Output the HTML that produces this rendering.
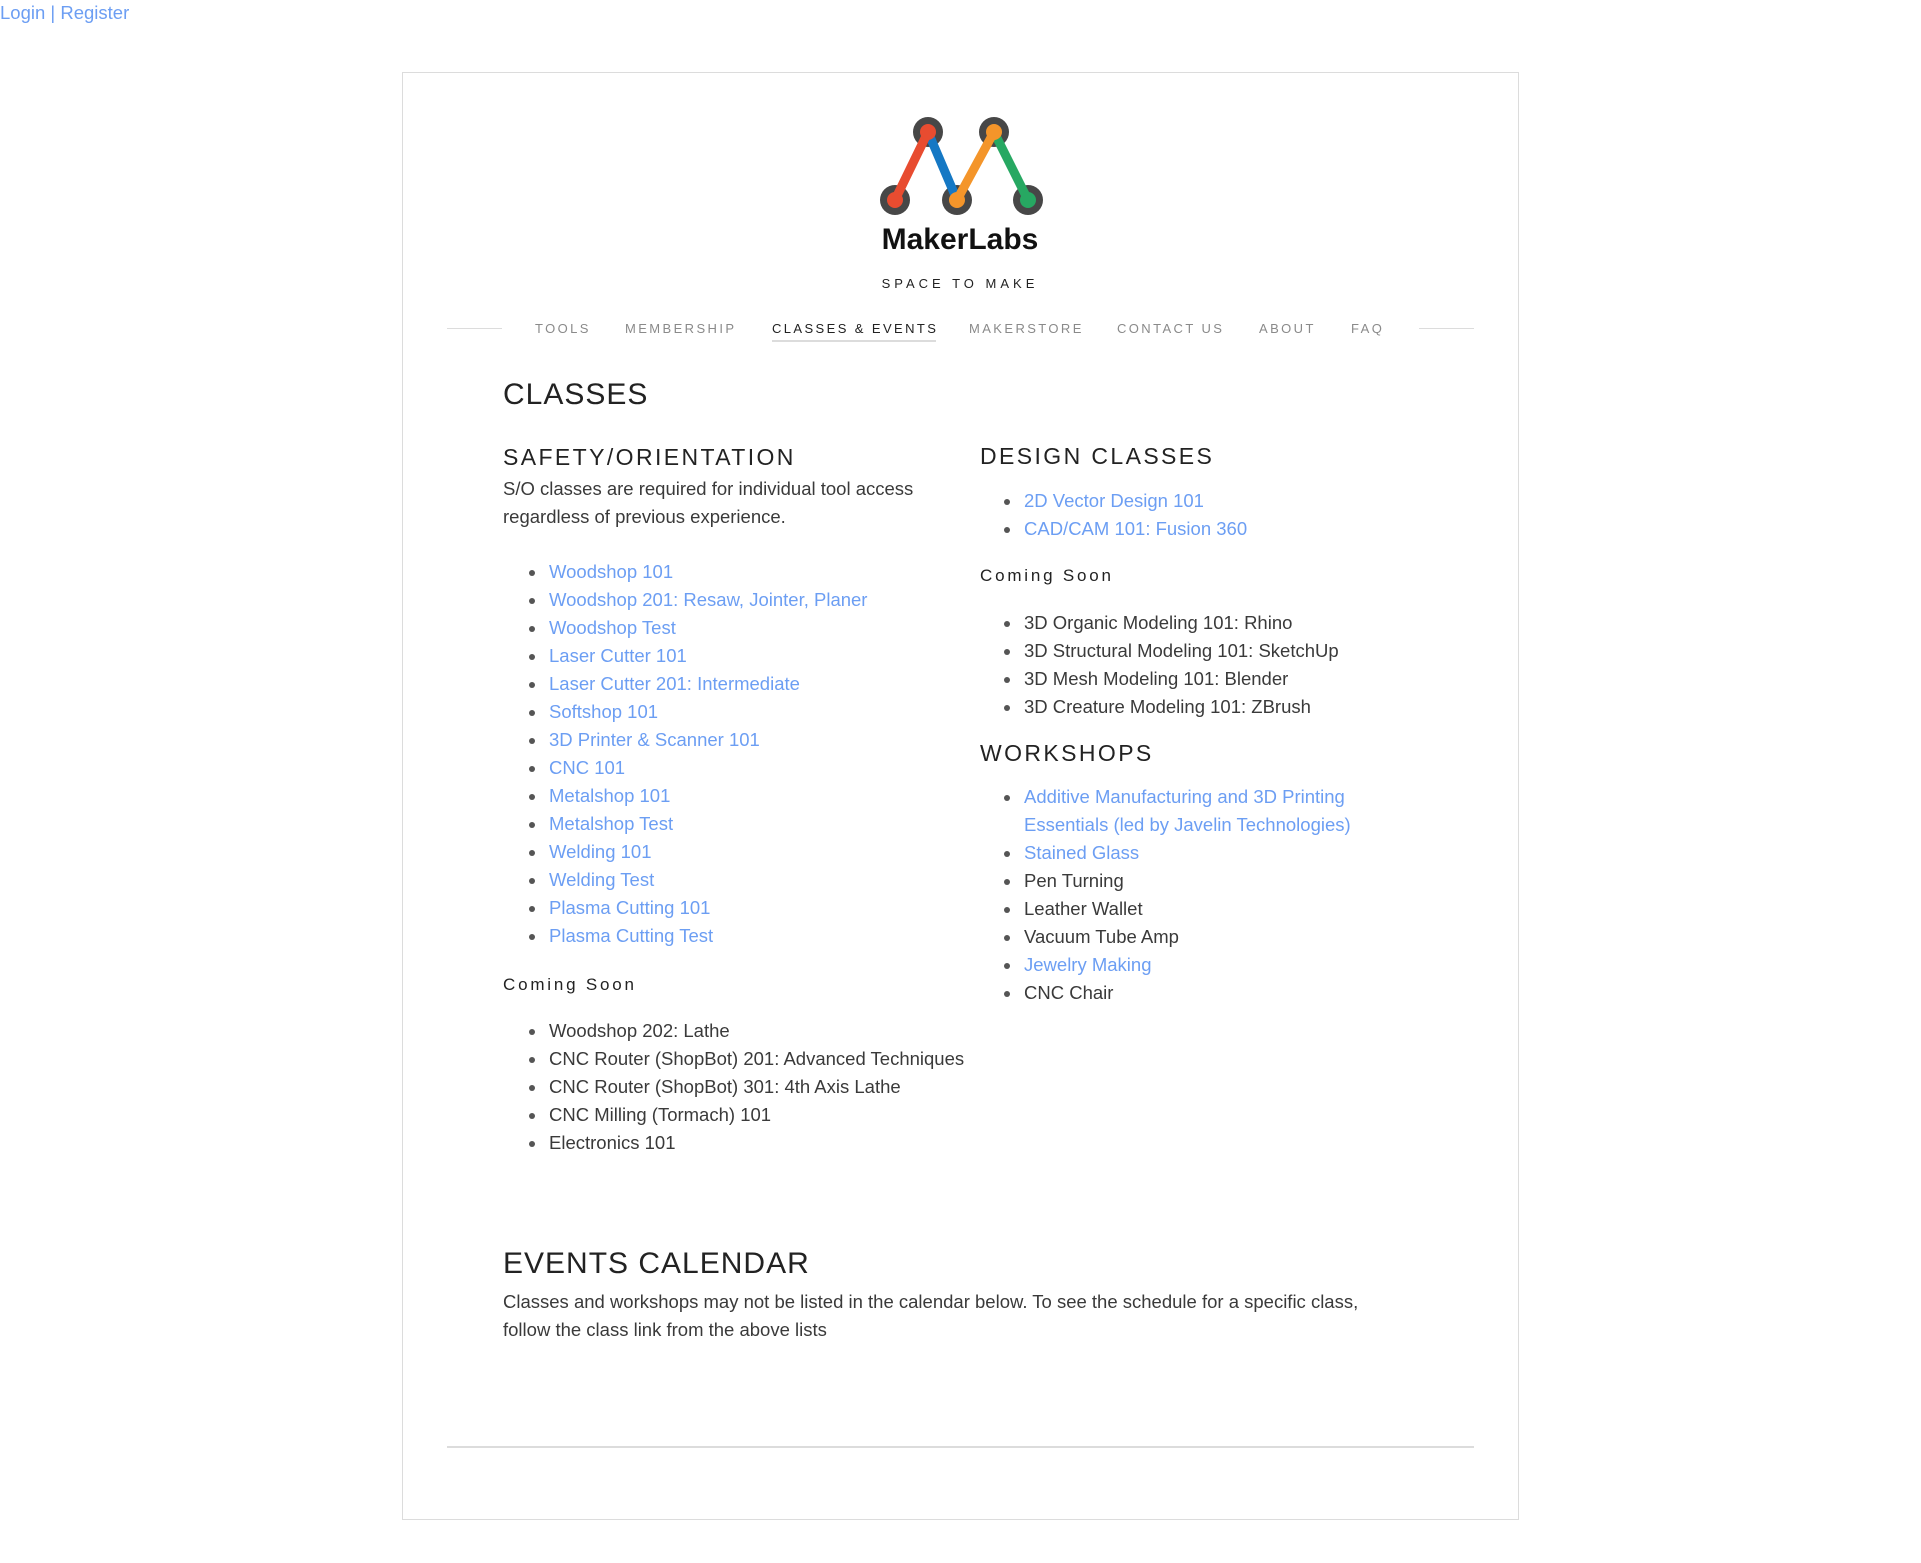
<!DOCTYPE html>
<html><head><meta charset="utf-8">
<style>
*{margin:0;padding:0;box-sizing:border-box}
body{width:1921px;height:1563px;background:#fff;position:relative;font-family:"Liberation Sans",Arial,sans-serif;color:#333;overflow:hidden}
a{color:#6c9ef3;text-decoration:none}
.abs{position:absolute;white-space:nowrap}
.box{position:absolute;left:402px;top:72px;width:1117px;height:1448px;border:1px solid #dcdcdc}
.nav{position:absolute;top:322px;font-size:13px;line-height:13px;letter-spacing:2.4px;color:#8a8a8a}
.nav.act{color:#222}
.h2{font-size:30px;line-height:30px;color:#222;letter-spacing:1px}
.h3{font-size:23px;line-height:23px;color:#222;letter-spacing:2.4px}
.cs{font-size:17px;line-height:17px;color:#222;letter-spacing:2.8px}
ul.l{position:absolute;list-style:none;font-size:18.5px;line-height:28px}
ul.l li{position:relative;padding-left:0;white-space:nowrap;color:#3a3a3a}
ul.l li:before{content:"";position:absolute;left:-20px;top:12px;width:6px;height:6px;border-radius:50%;background:#555}
p.t{font-size:18.5px;line-height:28px;color:#3a3a3a}
.hl{position:absolute;height:1px;background:#dcdcdc}
</style></head><body>
<div class="abs" style="left:0;top:1px;font-size:18.5px;line-height:24px"><a>Login</a> <span style="color:#6c9ef3">|</span> <a>Register</a></div>
<div class="box"></div>

<svg class="abs" style="left:870px;top:105px" width="180" height="120" viewBox="870 105 180 120">
<g fill="#474747">
<circle cx="928" cy="132" r="15"/><circle cx="994" cy="132" r="15"/>
<circle cx="895" cy="200" r="15"/><circle cx="957" cy="200" r="15"/><circle cx="1028" cy="200" r="15"/>
</g>
<g stroke-width="9" stroke-linecap="round">
<line x1="928" y1="132" x2="957" y2="200" stroke="#1578c4"/>
<line x1="994" y1="132" x2="1028" y2="200" stroke="#27a862"/>
<line x1="895" y1="200" x2="928" y2="132" stroke="#e84c30"/>
<line x1="957" y1="200" x2="994" y2="132" stroke="#f4952a"/>
</g>
<circle cx="928" cy="132" r="8" fill="#e84c30"/><circle cx="994" cy="132" r="8" fill="#f4952a"/>
<circle cx="895" cy="200" r="8" fill="#e84c30"/><circle cx="957" cy="200" r="8" fill="#f4952a"/><circle cx="1028" cy="200" r="8" fill="#27a862"/>
</svg>
<div class="abs" style="left:860px;width:200px;text-align:center;top:225px;font-size:30px;line-height:30px;font-weight:bold;color:#111">MakerLabs</div>
<div class="abs" style="left:860px;width:200px;text-align:center;top:277px;font-size:13px;line-height:13px;letter-spacing:4px;color:#222">SPACE TO MAKE</div>

<div class="hl" style="left:447px;top:328px;width:55px"></div>
<div class="hl" style="left:1419px;top:328px;width:55px"></div>
<div class="nav" style="left:535px">TOOLS</div>
<div class="nav" style="left:625px">MEMBERSHIP</div>
<div class="nav act" style="left:772px">CLASSES &amp; EVENTS</div>
<div class="hl" style="left:772px;top:340px;width:164px;height:2px"></div>
<div class="nav" style="left:969px">MAKERSTORE</div>
<div class="nav" style="left:1117px">CONTACT US</div>
<div class="nav" style="left:1259px">ABOUT</div>
<div class="nav" style="left:1351px">FAQ</div>

<div class="abs h2" style="left:503px;top:380px">CLASSES</div>
<div class="abs h3" style="left:503px;top:446px">SAFETY/ORIENTATION</div>
<p class="abs t" style="left:503px;top:475px">S/O classes are required for individual tool access<br>regardless of previous experience.</p>
<ul class="l" style="left:549px;top:558px">
<li><a>Woodshop 101</a></li><li><a>Woodshop 201: Resaw, Jointer, Planer</a></li><li><a>Woodshop Test</a></li><li><a>Laser Cutter 101</a></li><li><a>Laser Cutter 201: Intermediate</a></li><li><a>Softshop 101</a></li><li><a>3D Printer &amp; Scanner 101</a></li><li><a>CNC 101</a></li><li><a>Metalshop 101</a></li><li><a>Metalshop Test</a></li><li><a>Welding 101</a></li><li><a>Welding Test</a></li><li><a>Plasma Cutting 101</a></li><li><a>Plasma Cutting Test</a></li>
</ul>
<div class="abs cs" style="left:503px;top:976px">Coming Soon</div>
<ul class="l" style="left:549px;top:1017px">
<li>Woodshop 202: Lathe</li><li>CNC Router (ShopBot) 201: Advanced Techniques</li><li>CNC Router (ShopBot) 301: 4th Axis Lathe</li><li>CNC Milling (Tormach) 101</li><li>Electronics 101</li>
</ul>

<div class="abs h3" style="left:980px;top:445px">DESIGN CLASSES</div>
<ul class="l" style="left:1024px;top:487px">
<li><a>2D Vector Design 101</a></li><li><a>CAD/CAM 101: Fusion 360</a></li>
</ul>
<div class="abs cs" style="left:980px;top:567px">Coming Soon</div>
<ul class="l" style="left:1024px;top:609px">
<li>3D Organic Modeling 101: Rhino</li><li>3D Structural Modeling 101: SketchUp</li><li>3D Mesh Modeling 101: Blender</li><li>3D Creature Modeling 101: ZBrush</li>
</ul>
<div class="abs h3" style="left:980px;top:742px">WORKSHOPS</div>
<ul class="l" style="left:1024px;top:783px">
<li><a>Additive Manufacturing and 3D Printing<br>Essentials (led by Javelin Technologies)</a></li><li><a>Stained Glass</a></li><li>Pen Turning</li><li>Leather Wallet</li><li>Vacuum Tube Amp</li><li><a>Jewelry Making</a></li><li>CNC Chair</li>
</ul>

<div class="abs h2" style="left:503px;top:1249px">EVENTS CALENDAR</div>
<p class="abs t" style="left:503px;top:1288px">Classes and workshops may not be listed in the calendar below. To see the schedule for a specific class,<br>follow the class link from the above lists</p>
<div class="hl" style="left:447px;top:1446px;width:1027px;height:2px"></div>
</body></html>
